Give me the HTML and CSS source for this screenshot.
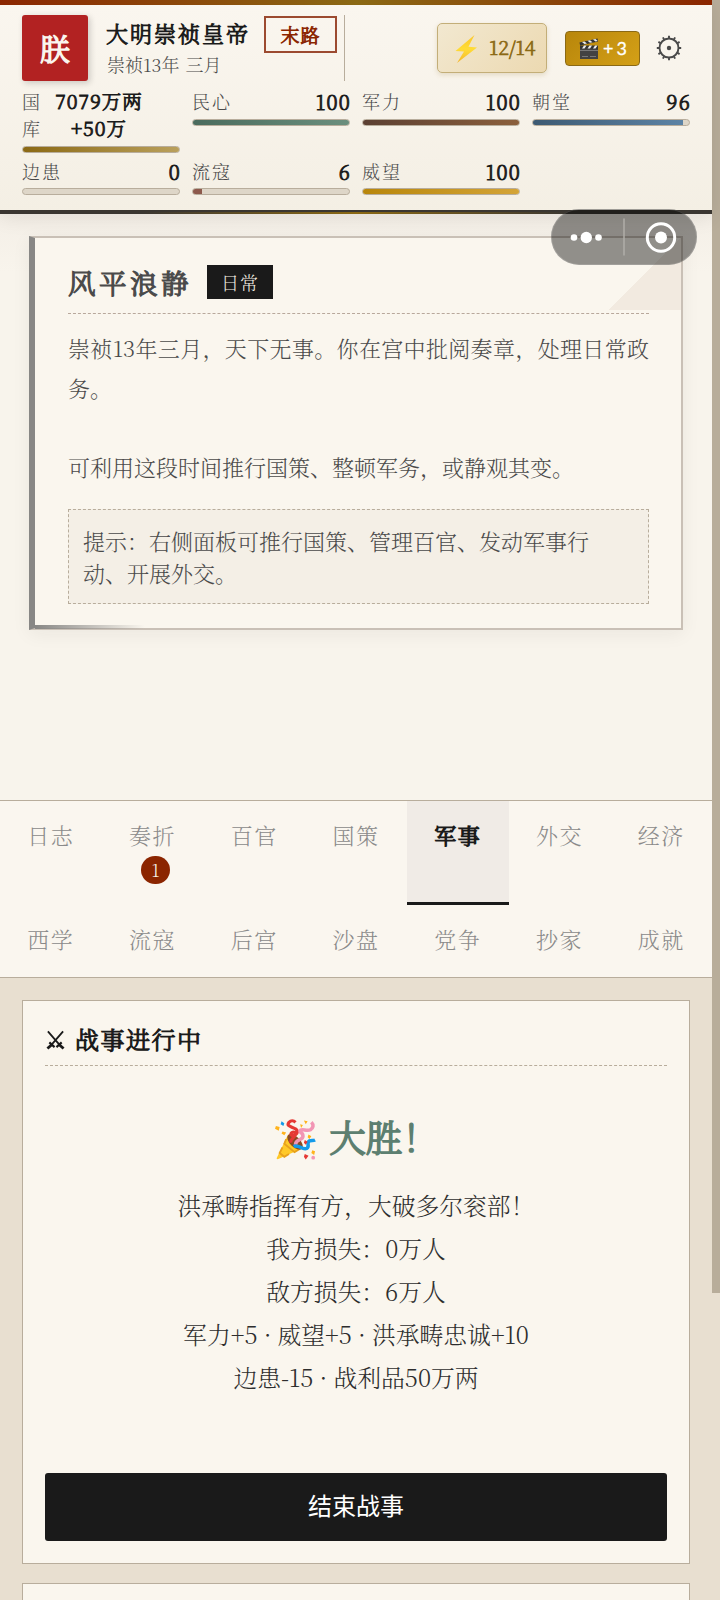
FILE: index.html
```html
<!DOCTYPE html>
<html lang="zh-CN">
<head>
<meta charset="utf-8">
<title>大明崇祯皇帝</title>
<link rel="stylesheet" href="styles.css">
</head>
<body>
<div class="screen">
<main class="app">
  <header class="header">
    <div class="top">
      <div class="seal">朕</div>
      <div class="identity">
        <div class="name">大明崇祯皇帝</div>
        <div class="date">崇祯13年 三月</div>
      </div>
      <div class="fate">末路</div>
      <div class="divider"></div>
      <div class="energy">
        <svg width="24" height="30" viewBox="0 0 24 30"><defs><linearGradient id="bolt" x1="0" y1="0" x2="0" y2="1"><stop offset="0" stop-color="#fbc62c"/><stop offset=".5" stop-color="#ffdc36"/><stop offset="1" stop-color="#f4b52b"/></linearGradient></defs><path d="M20.5 1 1.5 17l8.500.6L3 29 23 13.500l-8.500-.8z" fill="url(#bolt)"/></svg>
        <span>12/14</span>
      </div>
      <div class="bonus">
        <svg width="20" height="22" viewBox="0 0 20 22"><path d="M1 9h18v12H1z" fill="#424242"/><path d="M1 12.500h18" stroke="#888" stroke-width=".8"/><path d="m.5 4.500 18-4 .6 3-18 4z" fill="#333"/><path d="m3 4 2.500 2 2.500-.6L5.500 3.500zM8.500 2.800l2.500 2 2.500-.6-2.500-1.900zM14 1.500l2.500 2 2.200-.5L16.500 1z" fill="#eee"/><path d="M1 7.500h18v3H1z" fill="#333"/><path d="m3 10.500 2-3h2.500l-2 3zM8.500 10.500l2-3H13l-2 3zM14 10.500l2-3h2.500l-2 3z" fill="#eee"/><path d="M3 18.500h6M11 18.500h6" stroke="#888" stroke-width=".8"/></svg>
        <span>+</span><span>3</span>
      </div>
      <svg class="gear" width="26" height="26" viewBox="0 0 26 26" fill="none" stroke="#4a4a4a"><circle cx="13" cy="13" r="9.500" stroke-width="1.900"/><circle cx="13" cy="13" r="2.200" fill="#4a4a4a" stroke="none"/><path d="M13 .8v3M13 22.200v3M.8 13h3M22.200 13h3M6.900 2.400l1.400 2.500M17.700 21.100l1.400 2.500M19.100 2.400l-1.400 2.500M8.300 21.100l-1.400 2.500M2.400 6.900l2.500 1.400M21.100 17.700l2.500 1.400M2.400 19.100l2.500-1.400M21.100 8.300l2.500-1.400" stroke-width="1.900"/></svg>
    </div>
    <div class="stats">
      <div class="stat"><div class="row wrap"><span class="label">国<br>库</span><span class="value">7079万两<br>+50万</span></div><div class="bar"><i class="gold" style="width:100%"></i></div></div>
      <div class="stat"><div class="row"><span class="label">民心</span><span class="value">100</span></div><div class="bar"><i class="green" style="width:100%"></i></div></div>
      <div class="stat"><div class="row"><span class="label">军力</span><span class="value">100</span></div><div class="bar"><i class="brown" style="width:100%"></i></div></div>
      <div class="stat"><div class="row"><span class="label">朝堂</span><span class="value">96</span></div><div class="bar"><i class="blue" style="width:96%"></i></div></div>
      <div class="stat"><div class="row"><span class="label">边患</span><span class="value">0</span></div><div class="bar"></div></div>
      <div class="stat"><div class="row"><span class="label">流寇</span><span class="value">6</span></div><div class="bar"><i class="red" style="width:6%"></i></div></div>
      <div class="stat"><div class="row"><span class="label">威望</span><span class="value">100</span></div><div class="bar"><i class="amber" style="width:100%"></i></div></div>
    </div>
  </header>

  <section class="stage">
    <article class="event">
      <div class="event-head"><h2>风平浪静</h2><span class="tag">日常</span></div>
      <p class="story">崇祯13年三月，天下无事。你在宫中批阅奏章，处理日常政务。<br><br>可利用这段时间推行国策、整顿军务，或静观其变。</p>
      <p class="hint">提示：右侧面板可推行国策、管理百官、发动军事行<br>动、开展外交。</p>
    </article>
  </section>

  <nav class="tabs">
    <a class="tab">日志</a><a class="tab">奏折<b class="count">1</b></a><a class="tab">百官</a><a class="tab">国策</a><a class="tab active">军事</a><a class="tab">外交</a><a class="tab">经济</a>
    <a class="tab">西学</a><a class="tab">流寇</a><a class="tab">后宫</a><a class="tab">沙盘</a><a class="tab">党争</a><a class="tab">抄家</a><a class="tab">成就</a>
  </nav>

  <section class="panel">
    <article class="war">
      <h3 class="war-title"><svg width="19" height="20" viewBox="0 0 20 20" fill="none" stroke="#1a1a1a"><path d="M2 1 15 16M18 1 5 16" stroke-width="1.900"/><path d="m11 17.500 5.500-5M9 17.500l-5.500-5" stroke-width="2.200"/><path d="m14 15 4.500 4M6 15l-4.500 4" stroke-width="3"/></svg><span>战事进行中</span></h3>
      <div class="victory">
        <svg width="41" height="42" viewBox="0 0 44 44" fill="none"><path d="M14 16 2 41q-1 2 1.500 1.500L29 31z" fill="#ffc928"/><path d="m12 21-2 5 11 9 5-3M8 30l-3 6 5 4 5-3" stroke="#e8a11c" stroke-width="2"/><ellipse cx="21.500" cy="24" rx="5.500" ry="10.500" transform="rotate(-45 21.500 24)" fill="#8a4b24"/><path d="M17 25c-1-5 6-6 5-10-2-3-7 0-4 2 5 1 8-4 4-7-6-3-10-3-7-7 2-2 5-2 7 0" stroke="#e53935" stroke-width="3.400"/><path d="M22 27c0-7 8-4 8-9s-4-3-3-6 7 1 11-1c3-2 4-5 1-8" stroke="#f295b4" stroke-width="3.800"/><path d="M20 29c5-3 9 4 14 2 4-2-1-6 3-8 2-1 4 0 6-1" stroke="#149bea" stroke-width="3.800"/><g fill="#ffb31b"><path d="m1 7 4 1-1 4-4-2zM8 13l4 1-2 3-3-2zM31 1l4 1-2 3zM36 16l3 2-2 3-2-2zM27 5l3 1-2 3z"/></g><path d="m7 2 3 2-1 3-3-2z" fill="#149bea"/><path d="m32 22 3 2-2 3-2-2zM32 37l4 2-3 4-2-3z" fill="#e53935"/><path d="m40 33 3 1-1 4-3-2z" fill="#ffb31b"/><circle cx="41" cy="41" r="2" fill="#f295b4"/></svg>
        <span>大胜！</span>
      </div>
      <p class="report">洪承畴指挥有方，大破多尔衮部！<br>我方损失：0万人<br>敌方损失：6万人<br>军力+5 · 威望+5 · 洪承畴忠诚+10<br>边患-15 · 战利品50万两</p>
      <button class="finish">结束战事</button>
    </article>
    <article class="war"></article>
  </section>
</main>
<aside class="track"><div class="thumb"></div></aside>
<div class="capsule"><svg width="146" height="56" viewBox="0 0 146 56"><g fill="#fff"><circle cx="23" cy="28.500" r="3.300"/><circle cx="35.300" cy="28.500" r="5.700"/><circle cx="47.500" cy="28.500" r="3.300"/><circle cx="110" cy="28.500" r="6"/></g><circle cx="110" cy="28.500" r="13.700" fill="none" stroke="#fff" stroke-width="3"/><path d="M73 9.500v37" stroke="#b0aea9" stroke-width="1.500"/></svg></div>
</div>
</body>
</html>
```
FILE: styles.css
```css
* { box-sizing: border-box; }
body {
  margin: 0;
  font-family: "Noto Serif CJK SC", "Noto Serif SC", "Source Han Serif SC", "Noto Sans CJK SC", serif;
  color: #1a1a1a;
}
h2, h3, p { margin: 0; }
svg { display: block; flex: none; }
.seal, .name, .fate, .value, .event h2, .tab.active, .war-title span, .victory span {
  font-weight: 300;
  -webkit-text-stroke: .045em currentColor;
}
.screen { position: relative; display: flex; width: 720px; height: 1600px; overflow: hidden; background: #e8dfd0; }
.app { width: 712px; flex: none; display: flex; flex-direction: column; }
.track { width: 8px; background: #e8dfd0; }
.thumb { height: 1293px; background: #b8ad9a; }

.header {
  position: relative;
  z-index: 1;
  height: 213px;
  flex: none;
  padding: 10px 22px 0;
  background: linear-gradient(#faf6ef, #f4efe4);
  border-top: 5px solid;
  border-image: linear-gradient(90deg, #8b2500, #8b6914 50%, #8b2500) 5;
  border-bottom: 0;
  box-shadow: 0 4px 20px rgba(26, 26, 26, .09);
}
.header::after {
  content: "";
  position: absolute;
  left: 0; right: 0; bottom: -1px;
  height: 4px;
  background: linear-gradient(#3a3631 0 2.500px, transparent 2.500px), linear-gradient(90deg, #3a3631, #3a3631 20%, #8b6914 50%, #3a3631 80%);
}
.top { display: flex; height: 66px; }
.seal {
  width: 66px; height: 66px;
  border-radius: 3px;
  background: #b22222;
  color: #faf6ef;
  font-size: 30px; line-height: 65px; text-align: center;
  box-shadow: 2px 2px 6px rgba(26, 26, 26, .2);
}
.identity { width: 158px; margin-left: 18px; white-space: nowrap; }
.name { font-size: 22px; letter-spacing: 2px; line-height: 36px; }
.date { padding-left: 1px; font-size: 18px; font-weight: 300; word-spacing: 1.500px; line-height: 26px; color: #4a4a4a; }
.fate {
  width: 73px; height: 37px;
  margin-top: 1px;
  border: 2px solid #9c4a30;
  color: #8b2500;
  font-size: 19px; letter-spacing: 1px; line-height: 34px; text-align: center;
}
.divider { width: 1px; margin-left: 7px; background: #b8ad9c; }
.energy {
  display: flex; align-items: center; gap: 11px;
  width: 110px; height: 50px;
  margin: 8px 0 0 92px;
  padding-left: 16px;
  border: 1.500px solid #c3ae78;
  border-radius: 5px;
  background: linear-gradient(135deg, #f2e8d0, #ecd9b1);
  box-shadow: 0 2px 5px rgba(139, 105, 20, .18);
  color: #8b6914;
  font-size: 19.500px; font-weight: 300; letter-spacing: 0;
  -webkit-text-stroke: .7px currentColor;
}
.energy span { margin-top: -3px; }
.energy svg { margin-top: 2px; }
.bonus {
  display: flex; align-items: center;
  width: 75px; height: 35px;
  margin: 16px 0 0 18px;
  padding-left: 13px;
  border: 1px solid #8b6914;
  border-radius: 4px;
  background: linear-gradient(135deg, #b8860b, #d4a017);
  color: #fff;
  font: 400 18px Lato, sans-serif;
  -webkit-text-stroke: .3px currentColor;
}
.bonus span { margin: -2px 0 0 4px; }
.bonus span + span { margin-left: 3px; }
.gear { margin: 20px 0 0 16px; }

.stats { display: grid; grid-template-columns: repeat(4, 158px); gap: 6px 12px; margin-top: 7px; }
.row { display: flex; justify-content: space-between; height: 27px; margin-bottom: 4px; line-height: 27px; }
.stat:nth-child(n+5) .row { height: 26px; margin-bottom: 3px; line-height: 25px; }
.row.wrap { height: 54px; justify-content: flex-start; gap: 13px; }
.row.wrap .value { width: 88px; text-align: center; }
.label { font-size: 18px; font-weight: 300; letter-spacing: 2px; color: #4a4a4a; }
.value { font-size: 20px; letter-spacing: 1.300px; margin-right: -1px; white-space: nowrap; }
.row.wrap .value { font-size: 19.500px; letter-spacing: 1px; }
.bar { height: 7px; border: 1px solid #b8ad9c; border-radius: 4px; background: #ded6c8; overflow: hidden; }
.bar i { display: block; height: 100%; }
.gold { background: linear-gradient(90deg, #8b6914, #baa05c); }
.green { background: linear-gradient(90deg, #4a6b5d, #6b8f7e); }
.brown { background: linear-gradient(90deg, #5c4033, #8b5f3c); }
.blue { background: linear-gradient(90deg, #3d5a73, #5c83a5); }
.red { background: #8d594c; }
.amber { background: linear-gradient(90deg, #b8860b, #d4a437); }

.stage { height: 587px; flex: none; padding: 23px 29px 0; background: linear-gradient(#f4efe7, #f8f4ec 60px, #f8f4ec); }
.event {
  position: relative;
  height: 394px;
  padding: 25px 32px 0 33px;
  background: #faf6ee;
  border: 2px solid #c9c0b6;
  border-left: 6px solid #888785;
  box-shadow: 0 4px 18px rgba(26, 26, 26, .06);
}
.event::before {
  content: "";
  position: absolute;
  top: 0; right: 0;
  width: 73px; height: 72px;
  background: linear-gradient(135deg, transparent 50%, #f2eae0 50%);
}
.event::after {
  content: "";
  position: absolute;
  left: 0; bottom: -1px;
  width: 110px; height: 4px;
  background: linear-gradient(90deg, #888785, transparent);
}
.event-head { display: flex; gap: 14px; height: 51px; padding-top: 2px; border-bottom: 1px dashed #b8a89c; }
.event h2 { margin-top: -1px; font-size: 27.500px; letter-spacing: 3.500px; line-height: 36px; color: #4a4a4a; }
.tag { width: 66px; height: 34px; margin-left: 1px; background: #1a1a1a; color: #f5efe4; font-size: 18px; font-weight: 300; letter-spacing: 1px; line-height: 34px; text-align: center; }
.story { margin: 14px 0 0; font-size: 22px; line-height: 39.600px; font-weight: 300; color: #4a4a4a; text-align: justify; }
.hint { height: 95px; margin-top: 23px; padding: 15px 14px; border: 1px dashed #b8ad9c; background: #f4efe6; color: #4a4a4a; font-size: 22px; font-weight: 300; line-height: 31.500px; white-space: nowrap; }

.tabs {
  display: grid;
  grid-template-columns: repeat(7, 1fr);
  grid-template-rows: 104px 72px;
  height: 178px;
  flex: none;
  background: #faf6ef;
  border-top: 1px solid #b8ad9c;
  border-bottom: 1px solid #b8ad9c;
}
.tab { display: flex; flex-direction: column; align-items: center; padding-top: 18px; font-size: 22px; font-weight: 300; letter-spacing: 1.500px; line-height: 32px; color: #8a8a8a; }
.tab.active { background: #f0ebe6; border-bottom: 3px solid #1a1a1a; color: #1a1a1a; -webkit-text-stroke-width: 1.200px; }
.count { width: 29px; height: 28px; margin: 5px 0 0 6px; border-radius: 14px; background: #8b2500; color: #faf6ef; font-size: 17px; font-weight: 300; letter-spacing: 0; line-height: 28px; text-align: center; }

.panel { flex: 1; padding: 22px 22px 0; background: #e8dfd0; }
.war { height: 564px; padding: 22px; margin-bottom: 19px; background: #faf6ee; border: 1px solid #b8ad9c; }
.war-title { display: flex; align-items: center; gap: 10px; height: 43px; padding: 0 0 9px 1px; border-bottom: 1px dashed #b8ad9c; font-size: 24px; letter-spacing: 1.500px; }
.war-title span { margin-top: -2px; }
.victory { display: flex; justify-content: center; align-items: center; gap: 13px; height: 52px; margin: 46px 0 0 2px; font-size: 36.500px; line-height: 52px; color: #5d7f70; }
.victory span { margin-top: -5px; }
.victory svg { margin-top: 3px; }
.report { margin-top: 20px; text-align: center; font-size: 23.800px; font-weight: 300; line-height: 42.900px; color: #2d2d2d; }
.finish { display: block; width: 100%; height: 68px; margin-top: 74px; padding: 0 0 4px; border: 0; border-radius: 3px; background: #1a1a1a; color: #fff; font: 400 24px/64px "Noto Sans CJK SC", sans-serif; }

.capsule { position: absolute; z-index: 2; left: 551px; top: 209px; width: 146px; height: 56px; border-radius: 28px; background: rgba(0, 0, 0, .42); box-shadow: inset 0 0 0 1px rgba(255, 255, 255, .15); }
```
